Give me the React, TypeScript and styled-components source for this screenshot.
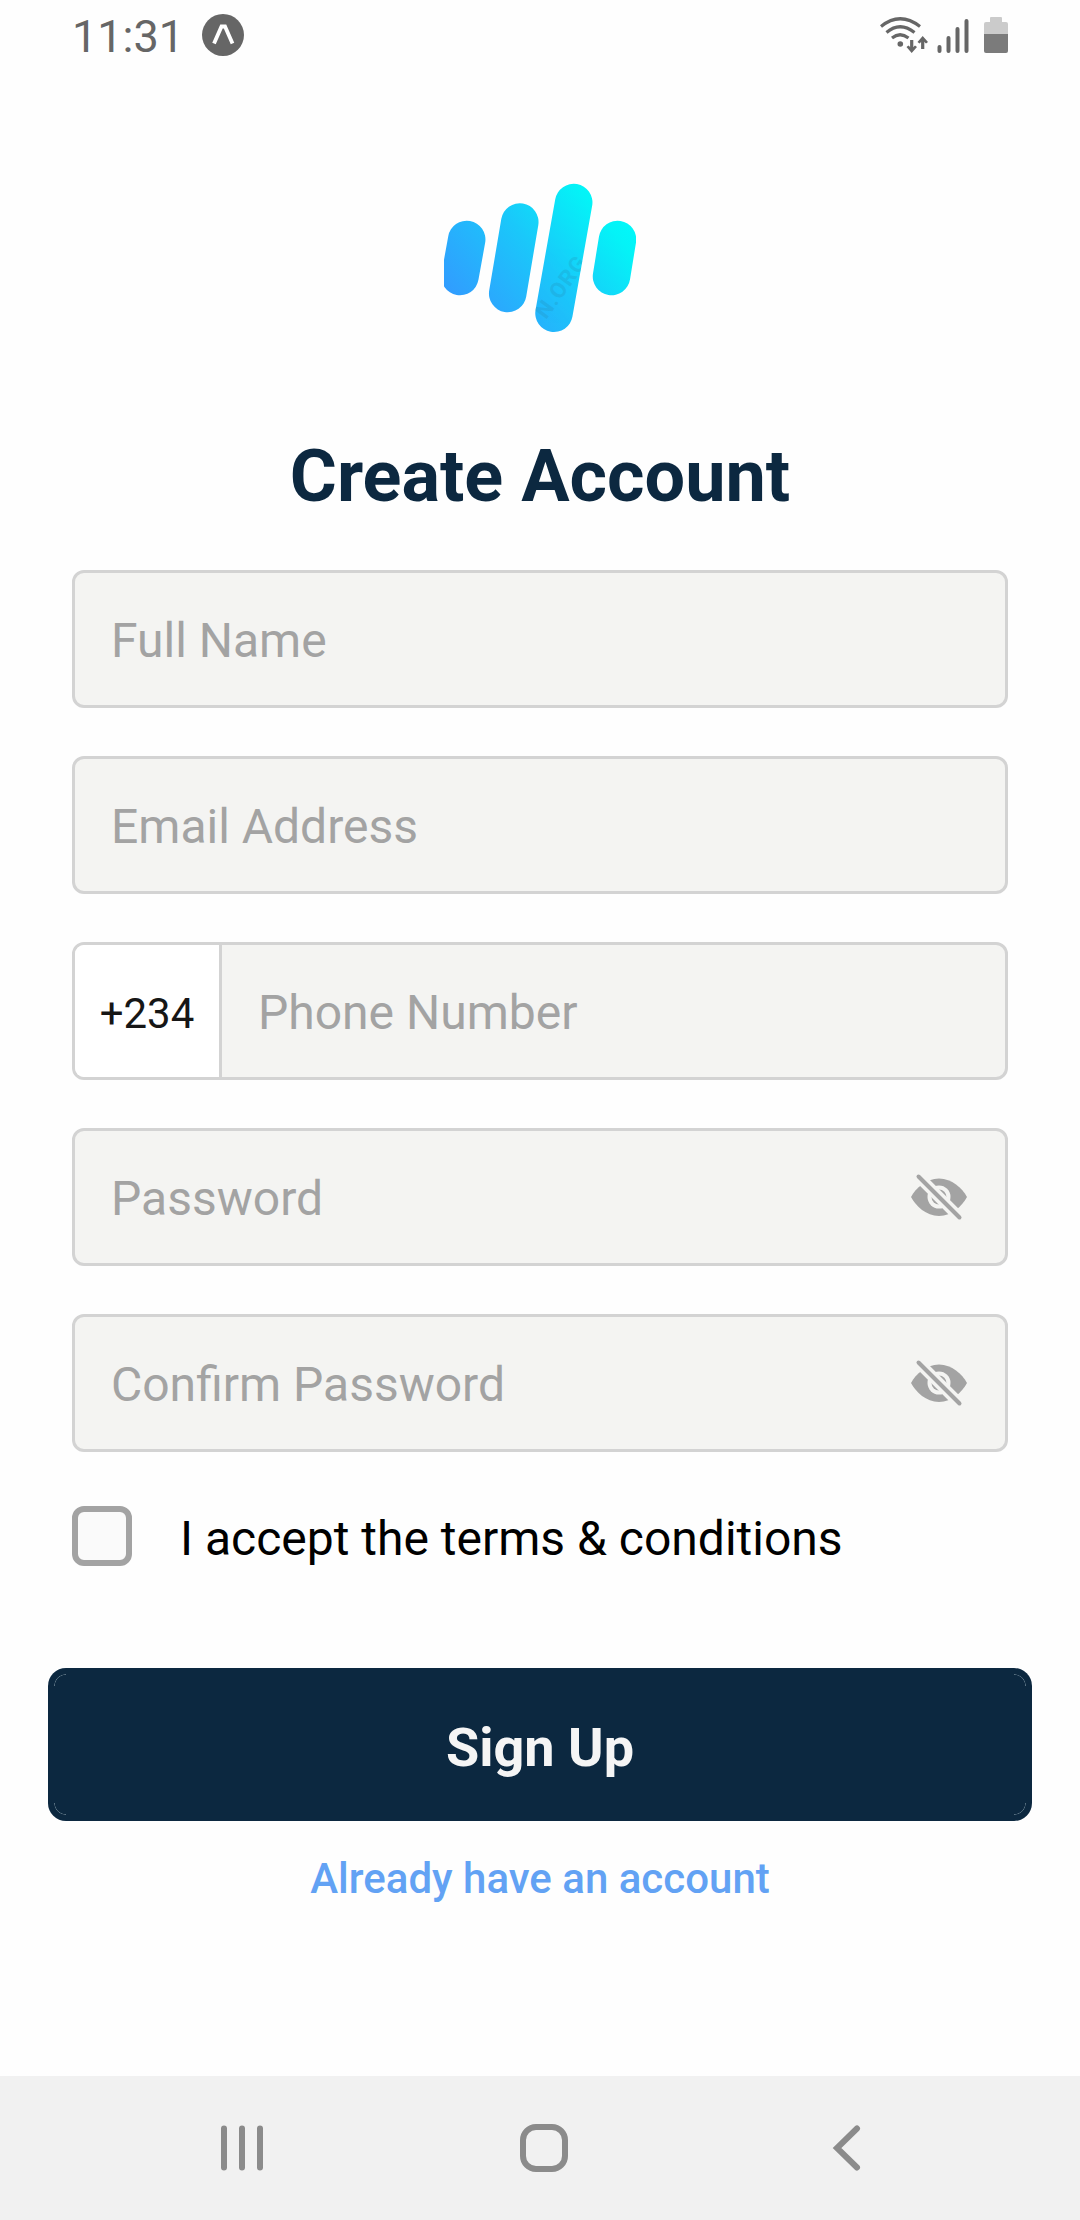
import React, { useState } from 'react';
import styled, { createGlobalStyle } from 'styled-components';

const GlobalStyle = createGlobalStyle`
  * { box-sizing: border-box; }
  body { margin: 0; background: #fefefe; font-family: Roboto, "Noto Sans", sans-serif; }
`;

const Screen = styled.div`
  width: 1080px;
  height: 2220px;
  display: flex;
  flex-direction: column;
  overflow: hidden;
  background: #fefefe;
`;

const StatusBar = styled.header`
  height: 72px;
  flex: none;
  display: flex;
  justify-content: space-between;
  padding: 0 69px 0 72px;
`;

const StatusGroup = styled.div`
  display: flex;
`;

const Clock = styled.span`
  width: 130px;
  color: #666;
  font-size: 45px;
  line-height: 73px;
  white-space: nowrap;
`;

const Content = styled.main`
  flex: 1;
  display: flex;
  flex-direction: column;
  align-items: center;
`;

const Logo = styled.svg`
  display: block;
  margin-top: 88px;
`;

const Title = styled.h1`
  margin: 83px 0 0;
  height: 135px;
  color: #0c2840;
  font-size: 72px;
  line-height: 84px;
  font-weight: 700;
  white-space: nowrap;
`;

const Form = styled.form`
  width: 936px;
  display: flex;
  flex-direction: column;
  gap: 48px;
`;

const Field = styled.div`
  height: 138px;
  display: flex;
  align-items: stretch;
  border: 3px solid #d3d3d3;
  border-radius: 12px;
  background: #f4f4f2;
  overflow: hidden;
`;

const Input = styled.input`
  flex: 1;
  min-width: 0;
  margin: 0;
  padding: 3px 36px 0;
  border: 0;
  outline: 0;
  background: transparent;
  color: #161616;
  font: 400 48px/56px Roboto, "Noto Sans", sans-serif;
  &::placeholder { color: #a3a3a3; opacity: 1; }
`;

const DialCode = styled.span`
  width: 147px;
  flex: none;
  padding-top: 3px;
  border-right: 3px solid #d3d3d3;
  background: #fff;
  color: #161616;
  font-size: 42px;
  line-height: 132px;
  text-align: center;
`;

const EyeButton = styled.button`
  width: 60px;
  margin-right: 36px;
  padding: 0;
  border: 0;
  background: none;
  display: flex;
  align-items: center;
  justify-content: center;
`;

const Terms = styled.label`
  height: 60px;
  margin-top: 6px;
  display: flex;
  color: #000;
  font-size: 48px;
  line-height: 66px;
  white-space: nowrap;
`;

const Checkbox = styled.input`
  appearance: none;
  width: 60px;
  height: 60px;
  margin: 0 48px 0 0;
  border: 6px solid #a3a3a3;
  border-radius: 12px;
  background: #fafafa;
`;

const SignUp = styled.button`
  width: 984px;
  height: 153px;
  flex: none;
  margin-top: 102px;
  padding: 6px;
  border: 0;
  border-radius: 18px;
  background: #0c2840;
  display: flex;
`;

const SignUpFace = styled.span`
  flex: 1;
  height: 141px;
  border-radius: 12px;
  background: radial-gradient(circle at 12px 12px, transparent 10.8px, #5d7585 11.5px, transparent 12.2px) 0 0 / 12px 12px no-repeat,
    radial-gradient(circle at 0 12px, transparent 10.8px, #5d7585 11.5px, transparent 12.2px) 100% 0 / 12px 12px no-repeat,
    radial-gradient(circle at 12px 0, transparent 10.8px, #5d7585 11.5px, transparent 12.2px) 0 100% / 12px 12px no-repeat,
    radial-gradient(circle at 0 0, transparent 10.8px, #5d7585 11.5px, transparent 12.2px) 100% 100% / 12px 12px no-repeat;
  color: #f5f5f5;
  font: 700 54px/148px Roboto, "Noto Sans", sans-serif;
  text-align: center;
`;

const LoginLink = styled.a`
  margin-top: 33px;
  color: #62a2f4;
  font-size: 42px;
  line-height: 50px;
  font-weight: 500;
  white-space: nowrap;
`;

const NavBar = styled.nav`
  height: 144px;
  flex: none;
  display: flex;
  align-items: center;
  background: #f1f1f1;
`;

const NavIcon = styled.svg<{ $gap: number }>`
  display: block;
  flex: none;
  margin-left: ${(p) => p.$gap}px;
  fill: none;
  stroke: #8b8b8b;
  stroke-width: 6;
  stroke-linecap: round;
`;

function EyeOff() {
  return (
    <svg width="60" height="60" viewBox="0 0 60 60">
      <path fill="#a3a3a3" d="M2 30C7 21 17 11.500 30 11.500S53 21 58 30C53 39 43 49 30 49S7 39 2 30Z" />
      <circle cx="30" cy="30" r="11.500" fill="#f4f4f2" />
      <circle cx="30" cy="30" r="7.500" fill="#a3a3a3" />
      <path d="M9 9L51 51" stroke="#f4f4f2" strokeWidth="11" />
      <path d="M9.500 9.500L50.500 50.500" stroke="#a3a3a3" strokeWidth="4" strokeLinecap="round" />
    </svg>
  );
}

function PasswordField({ label }: { label: string }) {
  const [visible, setVisible] = useState(false);
  return (
    <Field>
      <Input type={visible ? 'text' : 'password'} placeholder={label} />
      <EyeButton type="button" aria-label="Toggle visibility" onClick={() => setVisible(!visible)}>
        <EyeOff />
      </EyeButton>
    </Field>
  );
}

export default function App() {
  return (
    <Screen>
      <GlobalStyle />
      <StatusBar>
        <StatusGroup>
          <Clock>11:31</Clock>
          <svg width="44" height="72" viewBox="202 0 44 72">
            <circle cx="223" cy="35" r="21" fill="#666" />
            <path d="M214 43.500L221.500 26.500H225L232.500 43.500" fill="none" stroke="#fff" strokeWidth="3.800" />
          </svg>
        </StatusGroup>
        <svg width="131" height="72" viewBox="880 0 131 72">
          <g fill="none" stroke="#666" strokeWidth="3.200">
            <path d="M881 26.500Q900 11 920 26.500" />
            <path d="M886.500 32.500Q900 21 914.500 32.500" />
            <path d="M892 38Q900 31.500 908.500 38" />
            <path d="M911.700 40V49.500M922.700 49V39.500" />
          </g>
          <circle cx="900.300" cy="44" r="2.800" fill="#666" />
          <path fill="#666" d="M906.500 47L908.500 45.500L911.700 48.500L915 45.500L917 47L911.700 53ZM917.500 42L922.700 36L928 42L926 43.500L922.700 40.500L919.500 43.500Z" />
          <path d="M939.500 47V51M948.500 38V51M957.500 29V51M966.500 21V51" stroke="#666" strokeWidth="4" strokeLinecap="round" />
          <path fill="#cbcbcb" d="M984 24Q984 22 986 22H990V18Q990 17 991 17H1001Q1002 17 1002 18V22H1006Q1008 22 1008 24V34H984Z" />
          <path fill="#7b7b7b" d="M984 34H1008V51Q1008 53 1006 53H986Q984 53 984 51Z" />
        </svg>
      </StatusBar>

      <Content>
        <Logo width="192" height="192" viewBox="444 160 192 192">
          <defs>
            <linearGradient id="wave" gradientUnits="userSpaceOnUse" x1="460" y1="318" x2="616" y2="190">
              <stop offset="0" stopColor="#3399ff" />
              <stop offset="0.500" stopColor="#1ac8fa" />
              <stop offset="0.860" stopColor="#04f3f7" />
              <stop offset="1" stopColor="#00fafa" />
            </linearGradient>
            <clipPath id="bar">
              <path d="M554.500 199.500A19.200 19.200 0 0 1 592.300 204L572.800 316A19.200 19.200 0 0 1 535 312Z" />
            </clipPath>
          </defs>
          <g stroke="url(#wave)" strokeWidth="37.500" strokeLinecap="round">
            <path d="M466.700 239.500L460 276.500M519.800 222L507.700 293.500M573.700 202.500L554 313.300M617.500 239.500L611.500 276.500" />
          </g>
          <g clipPath="url(#bar)">
            <text x="546" y="320" transform="rotate(-54 546 320)" fill="#237c9e" opacity="0.200" fontFamily="Roboto, sans-serif" fontWeight="700" fontSize="22" letterSpacing="1">N.ORG</text>
          </g>
        </Logo>
        <Title>Create Account</Title>
        <Form>
          <Field><Input placeholder="Full Name" /></Field>
          <Field><Input placeholder="Email Address" /></Field>
          <Field>
            <DialCode>+234</DialCode>
            <Input placeholder="Phone Number" />
          </Field>
          <PasswordField label="Password" />
          <PasswordField label="Confirm Password" />
          <Terms>
            <Checkbox type="checkbox" />
            I accept the terms &amp; conditions
          </Terms>
        </Form>
        <SignUp><SignUpFace>Sign Up</SignUpFace></SignUp>
        <LoginLink>Already have an account</LoginLink>
      </Content>

      <NavBar>
        <NavIcon $gap={218} width="48" height="48" viewBox="218 2124 48 48">
          <path d="M224 2128.500V2167.500M242 2128.500V2167.500M260 2128.500V2167.500" />
        </NavIcon>
        <NavIcon $gap={254} width="48" height="48" viewBox="0 0 48 48">
          <rect x="3" y="3" width="42" height="42" rx="13" />
        </NavIcon>
        <NavIcon $gap={263} width="30" height="48" viewBox="831 2124 30 48">
          <path d="M857 2128.500L837 2148L857 2167.500" />
        </NavIcon>
      </NavBar>
    </Screen>
  );
}
